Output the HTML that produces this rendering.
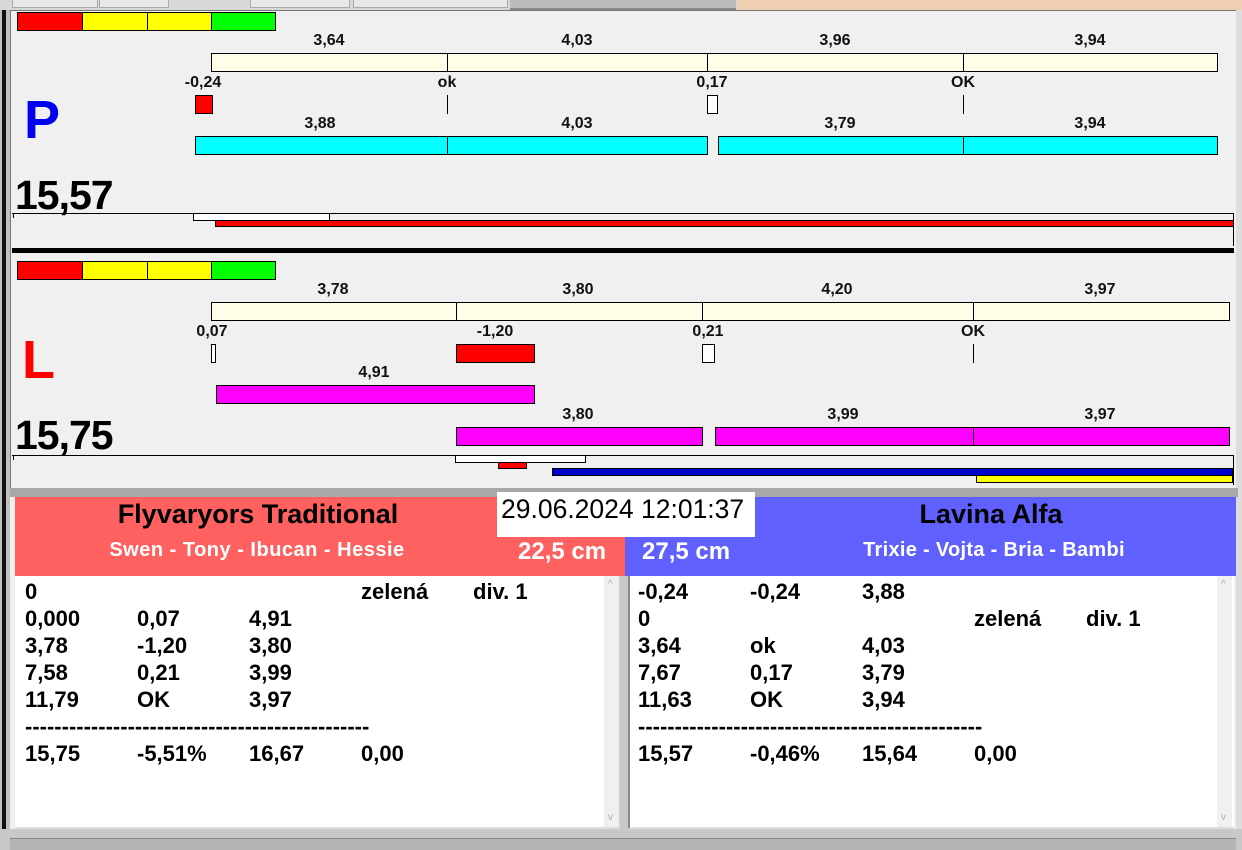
<!DOCTYPE html>
<html><head><meta charset="utf-8"><style>
*{margin:0;padding:0;box-sizing:border-box}
body{width:1242px;height:850px;overflow:hidden;background:#f0f0f0;position:relative;font-family:"Liberation Sans",Arial,sans-serif}
div{position:absolute}
.b{border:1px solid #000}
.t{font-weight:bold;font-size:16px;color:#111;transform:translateX(-50%);white-space:nowrap;line-height:18px}
.lt{font-weight:bold;font-size:22px;color:#000;line-height:27px;white-space:nowrap}
.w{color:#fff;font-weight:bold;white-space:nowrap}
</style></head><body>
<div style="left:0;top:0;width:1242px;height:12px;background:#d8d8d8;border-bottom:1px solid #999"></div>
<div style="left:12px;top:0;width:86px;height:8px;background:#e8e8e8;border:1px solid #aaa;border-top:none"></div>
<div style="left:99px;top:0;width:70px;height:8px;background:#e8e8e8;border:1px solid #aaa;border-top:none"></div>
<div style="left:250px;top:0;width:100px;height:8px;background:#e8e8e8;border:1px solid #aaa;border-top:none"></div>
<div style="left:353px;top:0;width:155px;height:8px;background:#e8e8e8;border:1px solid #aaa;border-top:none"></div>
<div style="left:510px;top:0;width:226px;height:10px;background:#bbb;border-bottom:2px solid #888"></div>
<div style="left:737px;top:0;width:505px;height:12px;background:#efcfb2"></div>
<div style="left:0;top:10px;width:10px;height:840px;background:#c0c0c0"></div>
<div style="left:2px;top:10px;width:4px;height:820px;background:#111"></div>
<div style="left:10px;top:10px;width:1228px;height:480px;background:#f0f0f0;border:1px solid #777"></div>
<div style="left:1236px;top:10px;width:6px;height:840px;background:#ddd"></div>

<div class="b" style="left:17px;top:12px;width:66px;height:19px;background:#f00"></div>
<div class="b" style="left:82px;top:12px;width:66px;height:19px;background:#ff0"></div>
<div class="b" style="left:147px;top:12px;width:65px;height:19px;background:#ff0"></div>
<div class="b" style="left:211px;top:12px;width:65px;height:19px;background:#0f0"></div>

<div class="t" style="left:329px;top:32px">3,64</div>
<div class="t" style="left:577px;top:32px">4,03</div>
<div class="t" style="left:835px;top:32px">3,96</div>
<div class="t" style="left:1090px;top:32px">3,94</div>
<div class="b" style="left:211px;top:53px;width:237px;height:19px;background:#fffde8"></div>
<div class="b" style="left:447px;top:53px;width:261px;height:19px;background:#fffde8"></div>
<div class="b" style="left:707px;top:53px;width:257px;height:19px;background:#fffde8"></div>
<div class="b" style="left:963px;top:53px;width:255px;height:19px;background:#fffde8"></div>

<div class="t" style="left:203px;top:74px">-0,24</div>
<div class="t" style="left:447px;top:74px">ok</div>
<div class="t" style="left:712px;top:74px">0,17</div>
<div class="t" style="left:963px;top:74px">OK</div>
<div class="b" style="left:195px;top:95px;width:18px;height:19px;background:#f00"></div>
<div style="left:447px;top:95px;width:1px;height:19px;background:#000"></div>
<div class="b" style="left:707px;top:95px;width:11px;height:19px;background:#fff"></div>
<div style="left:963px;top:95px;width:1px;height:19px;background:#000"></div>

<div class="t" style="left:320px;top:115px">3,88</div>
<div class="t" style="left:577px;top:115px">4,03</div>
<div class="t" style="left:840px;top:115px">3,79</div>
<div class="t" style="left:1090px;top:115px">3,94</div>
<div class="b" style="left:195px;top:136px;width:253px;height:19px;background:#0ff"></div>
<div class="b" style="left:447px;top:136px;width:261px;height:19px;background:#0ff"></div>
<div class="b" style="left:718px;top:136px;width:246px;height:19px;background:#0ff"></div>
<div class="b" style="left:963px;top:136px;width:255px;height:19px;background:#0ff"></div>

<div style="left:24px;top:88px;font-size:54px;font-weight:bold;color:#0000ee;line-height:64px">P</div>
<div style="left:15px;top:172px;font-size:41px;font-weight:bold;color:#000;line-height:46px;letter-spacing:-1px">15,57</div>
<div style="left:12px;top:213px;width:1222px;height:1px;background:#000"></div>
<div style="left:13px;top:213px;width:1px;height:5px;background:#000"></div>
<div style="left:1233px;top:213px;width:1px;height:33px;background:#000"></div>
<div class="b" style="left:193px;top:213px;width:137px;height:8px;background:#fff"></div>
<div class="b" style="left:215px;top:220px;width:1019px;height:7px;background:#f00"></div>
<div style="left:12px;top:248px;width:1222px;height:5px;background:#000"></div>

<div class="b" style="left:17px;top:261px;width:66px;height:19px;background:#f00"></div>
<div class="b" style="left:82px;top:261px;width:66px;height:19px;background:#ff0"></div>
<div class="b" style="left:147px;top:261px;width:65px;height:19px;background:#ff0"></div>
<div class="b" style="left:211px;top:261px;width:65px;height:19px;background:#0f0"></div>

<div class="t" style="left:333px;top:281px">3,78</div>
<div class="t" style="left:578px;top:281px">3,80</div>
<div class="t" style="left:837px;top:281px">4,20</div>
<div class="t" style="left:1100px;top:281px">3,97</div>
<div class="b" style="left:211px;top:302px;width:246px;height:19px;background:#fffde8"></div>
<div class="b" style="left:456px;top:302px;width:247px;height:19px;background:#fffde8"></div>
<div class="b" style="left:702px;top:302px;width:272px;height:19px;background:#fffde8"></div>
<div class="b" style="left:973px;top:302px;width:257px;height:19px;background:#fffde8"></div>

<div class="t" style="left:212px;top:323px">0,07</div>
<div class="t" style="left:495px;top:323px">-1,20</div>
<div class="t" style="left:708px;top:323px">0,21</div>
<div class="t" style="left:973px;top:323px">OK</div>
<div class="b" style="left:211px;top:344px;width:5px;height:19px;background:#fff"></div>
<div class="b" style="left:456px;top:344px;width:79px;height:19px;background:#f00"></div>
<div class="b" style="left:702px;top:344px;width:13px;height:19px;background:#fff"></div>
<div style="left:973px;top:344px;width:1px;height:19px;background:#000"></div>

<div class="t" style="left:374px;top:364px">4,91</div>
<div class="b" style="left:216px;top:385px;width:319px;height:19px;background:#f0f"></div>

<div class="t" style="left:578px;top:406px">3,80</div>
<div class="t" style="left:843px;top:406px">3,99</div>
<div class="t" style="left:1100px;top:406px">3,97</div>
<div class="b" style="left:456px;top:427px;width:247px;height:19px;background:#f0f"></div>
<div class="b" style="left:715px;top:427px;width:259px;height:19px;background:#f0f"></div>
<div class="b" style="left:973px;top:427px;width:257px;height:19px;background:#f0f"></div>

<div style="left:22px;top:328px;font-size:54px;font-weight:bold;color:#f00;line-height:64px">L</div>
<div style="left:15px;top:412px;font-size:41px;font-weight:bold;color:#000;line-height:46px;letter-spacing:-1px">15,75</div>
<div style="left:12px;top:455px;width:1222px;height:1px;background:#000"></div>
<div style="left:13px;top:455px;width:1px;height:5px;background:#000"></div>
<div style="left:1233px;top:455px;width:1px;height:30px;background:#000"></div>
<div class="b" style="left:455px;top:455px;width:131px;height:8px;background:#fff"></div>
<div class="b" style="left:498px;top:462px;width:29px;height:7px;background:#f00"></div>
<div class="b" style="left:552px;top:468px;width:681px;height:8px;background:#0000cc"></div>
<div class="b" style="left:976px;top:475px;width:257px;height:8px;background:#ff0"></div>

<div style="left:10px;top:488px;width:1228px;height:9px;background:#a8a8a8"></div>

<div style="left:15px;top:497px;width:610px;height:79px;background:#ff6060"></div>
<div style="left:625px;top:497px;width:611px;height:79px;background:#6060ff"></div>
<div style="left:15px;top:498px;width:486px;text-align:center;font-size:27px;font-weight:bold;line-height:32px">Flyvaryors Traditional</div>
<div class="w" style="left:57px;top:538px;width:400px;text-align:center;font-size:20px;line-height:24px;letter-spacing:0.5px">Swen - Tony - Ibucan - Hessie</div>
<div class="w" style="left:518px;top:538px;font-size:24px;line-height:28px">22,5 cm</div>
<div style="left:497px;top:492px;width:258px;height:45px;background:#fff"></div>
<div style="left:501px;top:493px;font-size:26.5px;line-height:32px;color:#000;white-space:nowrap">29.06.2024 12:01:37</div>
<div style="left:791px;top:498px;width:400px;text-align:center;font-size:27px;font-weight:bold;line-height:32px">Lavina Alfa</div>
<div class="w" style="left:642px;top:538px;font-size:24px;line-height:28px">27,5 cm</div>
<div class="w" style="left:794px;top:538px;width:400px;text-align:center;font-size:20px;line-height:24px;letter-spacing:0.3px">Trixie - Vojta - Bria - Bambi</div>

<div style="left:15px;top:576px;width:606px;height:253px;background:#fff;border-right:2px solid #ccc;border-bottom:2px solid #ddd"></div>
<div style="left:604px;top:576px;width:15px;height:251px;background:#f0f0f0;color:#aaa;font-size:10px;text-align:center">
 <div style="left:4px;top:3px">^</div><div style="left:4px;top:236px">v</div></div>
<div style="left:621px;top:576px;width:7px;height:253px;background:#c8c8c8"></div>
<div style="left:628px;top:576px;width:606px;height:253px;background:#fff;border-left:2px solid #888;border-bottom:2px solid #ddd"></div>
<div style="left:1217px;top:576px;width:15px;height:251px;background:#f0f0f0;color:#aaa;font-size:10px">
 <div style="left:4px;top:3px">^</div><div style="left:4px;top:236px">v</div></div>

<div class="lt" style="left:25px;top:578px">0<br>0,000<br>3,78<br>7,58<br>11,79<br>-----------------------------------------------<br>15,75</div>
<div class="lt" style="left:137px;top:578px"><br>0,07<br>-1,20<br>0,21<br>OK<br><br>-5,51%</div>
<div class="lt" style="left:249px;top:578px"><br>4,91<br>3,80<br>3,99<br>3,97<br><br>16,67</div>
<div class="lt" style="left:361px;top:578px">zelená<br><br><br><br><br><br>0,00</div>
<div class="lt" style="left:473px;top:578px">div. 1</div>

<div class="lt" style="left:638px;top:578px">-0,24<br>0<br>3,64<br>7,67<br>11,63<br>-----------------------------------------------<br>15,57</div>
<div class="lt" style="left:750px;top:578px">-0,24<br><br>ok<br>0,17<br>OK<br><br>-0,46%</div>
<div class="lt" style="left:862px;top:578px">3,88<br><br>4,03<br>3,79<br>3,94<br><br>15,64</div>
<div class="lt" style="left:974px;top:578px"><br>zelená<br><br><br><br><br>0,00</div>
<div class="lt" style="left:1086px;top:578px"><br>div. 1</div>

<div style="left:0;top:829px;width:1242px;height:21px;background:#c8c8c8"></div>
<div style="left:10px;top:838px;width:1226px;height:12px;background:#b4b4b4;border-top:1px solid #888"></div>
</body></html>
